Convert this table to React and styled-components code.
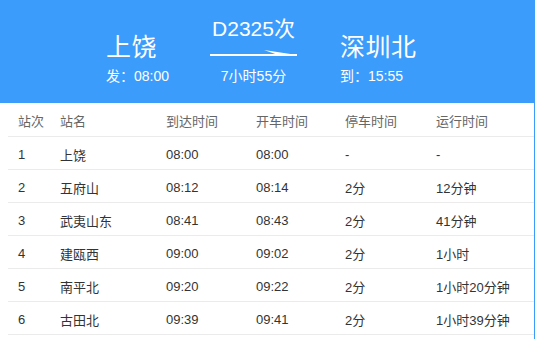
import styled, { createGlobalStyle } from 'styled-components';

const GlobalStyle = createGlobalStyle`
  html, body {
    margin: 0;
    padding: 0;
    height: 100%;
    overflow: hidden;
    background: #fff;
  }
  #root {
    height: 100%;
  }
  body {
    font-family: "Liberation Sans", "Noto Sans CJK SC", sans-serif;
  }
`;

const Page = styled.div`
  display: flex;
  flex-direction: column;
  height: 100%;
`;

const Banner = styled.header`
  background: #3b9cfb;
  color: #fff;
  height: 103px;
  box-sizing: border-box;
  display: flex;
  align-items: flex-end;
  padding: 0 0 18px 106px;
  flex-shrink: 0;
`;

const Side = styled.div`
  display: flex;
  flex-direction: column;
  width: ${(p) => p.$width}px;
  margin-left: ${(p) => p.$offset || 0}px;
`;

const StationName = styled.div`
  font-size: 25px;
  line-height: 30px;
  margin-bottom: 5px;
  letter-spacing: 0.5px;
`;

const SubText = styled.div`
  font-size: 14px;
  line-height: 18px;
  white-space: nowrap;
`;

const Middle = styled.div`
  display: flex;
  flex-direction: column;
  align-items: center;
  width: 87px;
`;

const TrainNo = styled.div`
  font-size: 21px;
  line-height: 26px;
  margin-bottom: 7px;
  white-space: nowrap;
`;

const Arrow = styled.svg`
  display: block;
  margin-bottom: 8px;
`;

const TableWrap = styled.div`
  flex: 1;
  display: flex;
  flex-direction: column;
  margin-left: 8px;
  border-right: 1px solid #3b9cfb;
  min-height: 0;
`;

const Row = styled.div`
  display: grid;
  grid-template-columns: 42px 106px 90px 89px 91px 1fr;
  padding-left: 10px;
  box-sizing: border-box;
  height: ${(p) => (p.$head ? 34 : 33)}px;
  padding-top: 2px;
  align-items: center;
  border-bottom: 1px solid #ebebeb;
  font-size: 13px;
  color: ${(p) => (p.$head ? '#666' : '#333')};
  flex-shrink: 0;
`;

const Cell = styled.div`
  white-space: nowrap;
`;

const Body = styled.div`
  flex: 1;
  overflow-y: scroll;
  min-height: 0;

  &::-webkit-scrollbar {
    width: 9px;
  }
  &::-webkit-scrollbar-track {
    background: #f2f2f2;
    border-left: 1px solid #dcdcdc;
  }
  &::-webkit-scrollbar-thumb {
    background: #fff;
    border: 1px solid #d8d8d8;
  }
`;

const List = styled.div`
  padding-bottom: 190px;
`;

const columns = ['站次', '站名', '到达时间', '开车时间', '停车时间', '运行时间'];

const stops = [
  ['1', '上饶', '08:00', '08:00', '-', '-'],
  ['2', '五府山', '08:12', '08:14', '2分', '12分钟'],
  ['3', '武夷山东', '08:41', '08:43', '2分', '41分钟'],
  ['4', '建瓯西', '09:00', '09:02', '2分', '1小时'],
  ['5', '南平北', '09:20', '09:22', '2分', '1小时20分钟'],
  ['6', '古田北', '09:39', '09:41', '2分', '1小时39分钟'],
];

export default function App() {
  return (
    <Page>
      <GlobalStyle />
      <Banner>
        <Side $width={104}>
          <StationName>上饶</StationName>
          <SubText>发：08:00</SubText>
        </Side>
        <Middle>
          <TrainNo>D2325次</TrainNo>
          <Arrow width="87" height="10" viewBox="0 0 87 10">
            <rect x="0" y="5" width="87" height="2" fill="#fff" />
            <polygon points="54,1 87,6 86,7 68,6" fill="#fff" />
          </Arrow>
          <SubText>7小时55分</SubText>
        </Middle>
        <Side $width={100} $offset={43}>
          <StationName>深圳北</StationName>
          <SubText>到：15:55</SubText>
        </Side>
      </Banner>
      <TableWrap>
        <Row $head>
          {columns.map((c) => (
            <Cell key={c}>{c}</Cell>
          ))}
        </Row>
        <Body>
          <List>
            {stops.map((s) => (
              <Row key={s[0]}>
                {s.map((v, i) => (
                  <Cell key={i}>{v}</Cell>
                ))}
              </Row>
            ))}
          </List>
        </Body>
      </TableWrap>
    </Page>
  );
}
